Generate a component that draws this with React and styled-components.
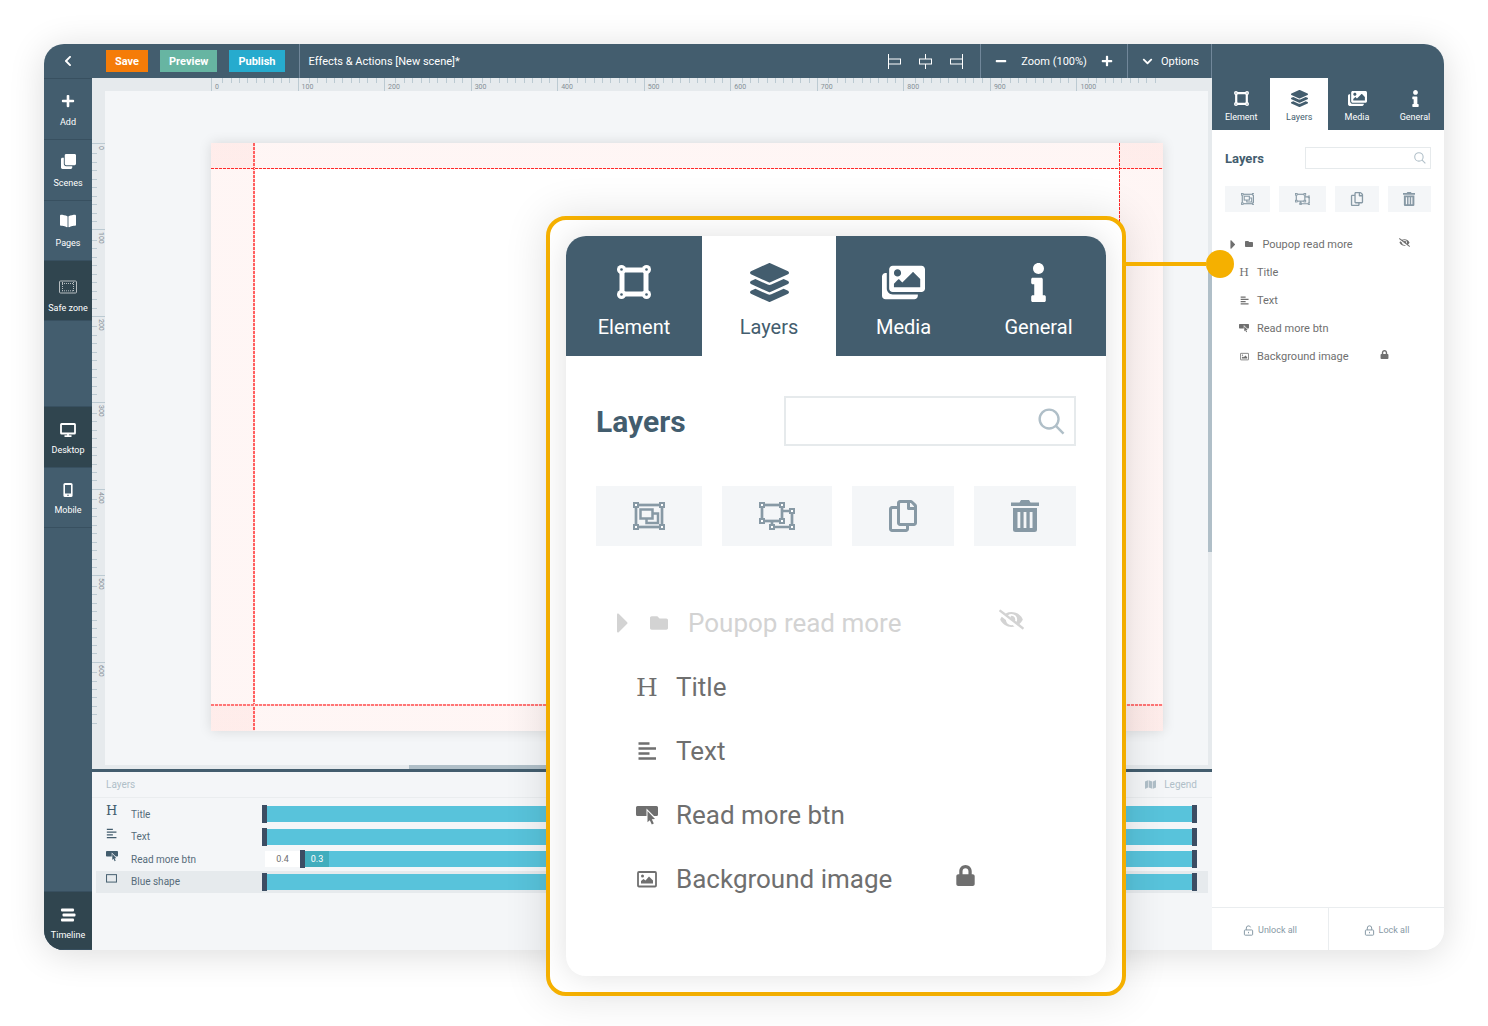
import React from 'react';
import styled, { createGlobalStyle, ThemeProvider } from 'styled-components';
import {
  FaPlus, FaMinus, FaChevronLeft, FaChevronDown, FaClone, FaBookOpen, FaLayerGroup,
  FaImages, FaInfo, FaRegCopy, FaFolder, FaEyeSlash, FaLock, FaMap,
} from 'react-icons/fa';

const colors = {
  slate: '#435d6e',
  slateDark: '#30454f',
  line: '#385060',
  surface: '#f4f6f8',
  ruler: '#e6eaed',
  muted: '#8799a5',
  pale: '#b0bfc8',
  text: '#6f6f6f',
  bar: '#58c3db',
  handle: '#3c4d63',
  amber: '#f5b000',
};

// the layers panel is drawn twice: docked in the editor and magnified in the callout
const docked = {
  scale: 0.433, listGap: 18, indent: 14, folderIndent: 5, nameWidth: 123, folderNameWidth: 137,
};
const magnified = {
  scale: 1, listGap: 45, indent: 40, folderIndent: 20, nameWidth: 279, folderNameWidth: 311,
};
const px = n => props => `${Math.round(n * props.theme.scale)}px`;

const GlobalStyle = createGlobalStyle`
  * { box-sizing: border-box; }
  body {
    margin: 0;
    background: #fff;
    font-family: Roboto, "Liberation Sans", sans-serif;
  }
  button, input {
    font: inherit;
    color: inherit;
    margin: 0;
    padding: 0;
    border: 0;
    background: none;
  }
  svg { display: block; flex: none; }
`;

/* ---------- icons ---------- */

const Icon = ({ w = 24, h = 24, width = '1em', children, ...rest }) => (
  <svg viewBox={`0 0 ${w} ${h}`} width={width} height="1em" fill="none" stroke="currentColor" aria-hidden="true" {...rest}>
    {children}
  </svg>
);

const AlignIcon = ({ side }) => {
  const bar = { left: 0.5, center: 7.5, right: 14.5 }[side];
  const box = { left: 0.5, center: 1.5, right: 2.5 }[side];
  return (
    <Icon w={15} h={15}>
      {side === 'center'
        ? <path d="M7.5 0v5M7.5 10v5" />
        : <path d={`M${bar} 0v15`} />}
      <rect x={box} y="5" width="12" height="5" />
    </Icon>
  );
};

const SafeZoneIcon = () => (
  <Icon w={18} h={14} strokeWidth="1" opacity="0.65">
    <rect x="0.5" y="1" width="17" height="12" rx="1" />
    <path d="M3.5 2v10M14.5 2v10M3 3.5h12M3 10.8h12" strokeDasharray="1 1" />
  </Icon>
);

const DesktopIcon = () => (
  <Icon w={16} h={16}>
    <rect x="1" y="2" width="14" height="9.5" rx="0.6" strokeWidth="1.8" />
    <path d="M8 12v2M4.5 14.2h7" strokeWidth="1.8" />
  </Icon>
);

const MobileIcon = () => (
  <Icon w={16} h={16}>
    <path d="M5 1h6a1.6 1.6 0 0 1 1.6 1.6v10.8a1.6 1.6 0 0 1-1.6 1.6H5a1.6 1.6 0 0 1-1.6-1.6V2.6A1.6 1.6 0 0 1 5 1zM5 3v8.5h6V3zM7.2 12.7v1h1.6v-1z" fill="currentColor" fillRule="evenodd" stroke="none" />
  </Icon>
);

const TimelineIcon = () => (
  <Icon w={16} h={16} fill="currentColor" stroke="none">
    <rect x="1" y="1.5" width="13" height="3" rx="1" />
    <rect x="2.5" y="6.5" width="13" height="3" rx="1" />
    <rect x="1" y="11.5" width="13" height="3" rx="1" />
  </Icon>
);

const ElementIcon = () => (
  <Icon w={34} h={34}>
    <rect x="5" y="5" width="24" height="24" rx="1" strokeWidth="5" />
    {[[4.5, 4.5], [29.5, 4.5], [4.5, 29.5], [29.5, 29.5]].map(([x, y]) => (
      <g key={`${x}-${y}`} stroke="none">
        <circle cx={x} cy={y} r="4.5" fill="currentColor" />
        <circle cx={x} cy={y} r="1.3" fill={colors.slate} />
      </g>
    ))}
  </Icon>
);

const Knots = ({ points }) => points.map(([x, y]) => (
  <rect key={`${x}-${y}`} x={x - 2} y={y - 2} width="4" height="4" strokeWidth="2" fill="#fff" />
));

const GroupIcon = () => (
  <Icon w={32} h={28} strokeWidth="2.7" width="1.143em">
    <rect x="3" y="3" width="26" height="22" />
    <rect x="7.5" y="7.5" width="12" height="9" strokeWidth="2.5" />
    <path d="M19.5 11.5H25v9.5H13.5v-4.5" strokeWidth="2.5" />
    <Knots points={[[3, 3], [29, 3], [3, 25], [29, 25]]} />
  </Icon>
);

const UngroupIcon = () => (
  <Icon w={36} h={28} strokeWidth="2.7" width="1.286em">
    <rect x="3" y="3" width="20" height="16" />
    <path d="M23 9h10v16H13v-6" />
    <Knots points={[[3, 3], [23, 3], [3, 19], [23, 19], [33, 9], [33, 25], [13, 25]]} />
  </Icon>
);

const TrashIcon = () => (
  <Icon w={28} h={32} width="0.875em">
    <path d="M0 2.5h8.5L10 0h8l1.500 2.500H28V6H0zM2 8h24v21.500a2.500 2.500 0 0 1-2.500 2.500h-19A2.500 2.500 0 0 1 2 29.500zM6.500 12v16h2.800V12zM12.600 12v16h2.800V12zM18.700 12v16h2.800V12z" fill="currentColor" fillRule="evenodd" stroke="none" />
  </Icon>
);

const SearchIcon = () => (
  <Icon w={28} h={28} strokeWidth="2.5">
    <circle cx="11.5" cy="11.5" r="9.8" />
    <path d="M18.5 18.5L26.5 26.5" />
  </Icon>
);

const CaretIcon = () => (
  <Icon w={12} h={20} width="0.6em">
    <path d="M1 1.500v17a1 1 0 0 0 1.700.700l8.500-8.500a1 1 0 0 0 0-1.400L2.700.800A1 1 0 0 0 1 1.500z" fill="currentColor" stroke="none" />
  </Icon>
);

const TextIcon = () => (
  <Icon w={20} h={20} strokeWidth="2.5">
    <path d="M1.5 2.5h11M1.5 7.5h17.5M1.5 12.5h11M1.5 17.5h17.5" />
  </Icon>
);

const ButtonIcon = () => (
  <Icon w={22} h={20}>
    <path d="M1.500 1h19A1.500 1.500 0 0 1 22 2.500v7A1.500 1.500 0 0 1 20.500 11H18L10.500 3.500V11h-9A1.500 1.500 0 0 1 0 9.500v-7A1.500 1.500 0 0 1 1.500 1z" fill="currentColor" stroke="none" />
    <path d="M11.500 6l7.500 8-3.200.300 2 4.200-2 1-2-4.300-2.300 2.100z" fill="currentColor" stroke="none" />
  </Icon>
);

const ImageIcon = () => (
  <Icon w={20} h={20}>
    <rect x="1" y="3" width="18" height="14.5" rx="1" strokeWidth="1.8" />
    <path d="M4 14.500v-2.500l2.500-2 2 1.500L12 7.500l4 4v3z" fill="currentColor" stroke="none" />
    <circle cx="5.5" cy="7" r="1.5" fill="currentColor" stroke="none" />
  </Icon>
);

const ShapeIcon = () => (
  <Icon w={20} h={20} strokeWidth="1.8">
    <rect x="1" y="3" width="18" height="13.5" />
  </Icon>
);

const PadlockIcon = ({ open }) => (
  <Icon w={18} h={20} strokeWidth="1.8">
    <rect x="1.5" y="9" width="15" height="9.5" rx="1.5" />
    <path d={open ? 'M5 9V5.500a4 4 0 0 1 7.800-1.200' : 'M5 9V5.500a4 4 0 0 1 8 0V9'} />
    <path d="M9 12.500v2.500" />
  </Icon>
);

const HeadingGlyph = styled.span`
  font-family: "DejaVu Serif", serif;
  line-height: 1;
`;

/* ---------- frame ---------- */

const Page = styled.div`
  position: relative;
  padding: 44px 44px 76px;
`;

const Editor = styled.div`
  display: grid;
  grid-template-columns: 48px minmax(0, 1fr) 232px;
  grid-template-rows: 34px minmax(0, 1fr);
  min-height: calc(100vh - 120px);
  border-radius: 20px;
  overflow: hidden;
  background: ${colors.surface};
  box-shadow: 0 4px 36px rgba(0, 0, 0, 0.14);
`;

/* ---------- top bar ---------- */

const TopBar = styled.header`
  grid-column: 1 / -1;
  display: flex;
  background: ${colors.slate};
  color: #fff;
  font-size: 11px;
`;

const BackButton = styled.button`
  width: 48px;
  display: grid;
  place-items: center;
  font-size: 12px;
`;

const TopGroup = styled.div`
  display: flex;
  align-items: center;
  gap: ${props => props.$gap}px;
  padding: 0 ${props => props.$pad || 14}px 0 14px;
  border-right: 1px solid #71879a;
`;

const TopButton = styled.button`
  height: 22px;
  padding: 0 9px;
  font-weight: 700;
  background: ${props => props.$color};
`;

const IconButton = styled.button`
  display: grid;
  place-items: center;
  font-size: ${props => props.$size}px;
`;

const SceneTitle = styled.h1`
  flex: 1;
  margin: 0;
  padding-left: 9px;
  align-self: center;
  font-size: 11px;
  font-weight: 400;
`;

const OptionsButton = styled.button`
  display: flex;
  align-items: center;
  gap: 8px;
`;

const TopBarEnd = styled.div`
  width: 232px;
`;

/* ---------- left rail ---------- */

const Rail = styled.nav`
  display: flex;
  flex-direction: column;
  background: ${colors.slate};
  color: #fff;
`;

const RailGroup = styled.div`
  display: grid;
  grid-auto-rows: 1fr;
  height: ${props => props.$height}px;
  margin-top: ${props => props.$top || 0};
`;

const RailButton = styled.button`
  display: flex;
  flex-direction: column;
  align-items: center;
  justify-content: flex-end;
  gap: ${props => props.$gap || 8}px;
  padding-bottom: ${props => props.$bottom || 11}px;
  border-top: 1px solid ${colors.line};
  background: ${props => (props.$active ? colors.slateDark : 'transparent')};
  font-size: 9px;
  line-height: 12px;
  white-space: nowrap;

  &:last-child { border-bottom: 1px solid ${colors.line}; }
  svg { font-size: ${props => props.$icon}px; }
`;

const RailItem = ({ icon, label, size = 16, ...rest }) => (
  <RailButton type="button" $icon={size} {...rest}>{icon}{label}</RailButton>
);

/* ---------- stage ---------- */

const Main = styled.main`
  display: flex;
  flex-direction: column;
`;

const Stage = styled.section`
  flex: 1;
  display: grid;
  grid-template-columns: 13px minmax(0, 1fr) 4px;
  grid-template-rows: 13px minmax(0, 1fr) 4px;
  background: ${colors.ruler};
`;

const RulerX = styled.div`
  grid-column: 1 / -1;
  display: grid;
  grid-template-columns: repeat(11, 1fr);
  padding: 0 49px 0 119px;
`;

const RulerY = styled.div`
  display: grid;
  grid-template-rows: repeat(6, minmax(0, 10fr)) minmax(0, 8fr);
  padding: 52px 0 34px;
`;

const RulerCell = styled.div`
  display: flex;
  flex-direction: ${props => (props.$vertical ? 'column' : 'row')};
  font-size: 7px;
  line-height: 8px;
  color: #858f96;
`;

const Tick = styled.span`
  flex: 1 1 0;
  min-width: 0;
  min-height: 0;
  height: ${props => (props.$vertical ? 'auto' : '5px')};
  width: ${props => (props.$vertical ? '5px' : 'auto')};
  border: 0 solid #bccad2;
  border-left-width: ${props => (props.$vertical ? 0 : 1)}px;
  border-top-width: ${props => (props.$vertical ? 1 : 0)}px;
  white-space: nowrap;

  &:first-child {
    height: ${props => (props.$vertical ? 'auto' : '13px')};
    width: ${props => (props.$vertical ? '13px' : 'auto')};
    padding: ${props => (props.$vertical ? '2px 0 0 5px' : '5px 0 0 3px')};
    writing-mode: ${props => (props.$vertical ? 'vertical-rl' : 'horizontal-tb')};
  }
`;

const Workspace = styled.div`
  display: flex;
  padding: 52px 45px 34px 106px;
  background: ${colors.surface};
`;

const dash = (dir, color) => `repeating-linear-gradient(${dir}, ${color} 0 3px, #ffe4e4 3px 4px)`;
const wash = 'linear-gradient(rgba(250, 70, 50, 0.05), rgba(250, 70, 50, 0.05))';

// dashed guides first, then the four translucent bands outside of the safe zone
const Canvas = styled.div`
  flex: 1;
  background:
    ${dash('to right', '#ff2a2a')} left 0 top 25px / 100% 1px no-repeat,
    ${dash('to right', '#ff7676')} left 0 bottom 25px / 100% 2px no-repeat,
    ${dash('to bottom', '#ff6060')} left 42px top 0 / 2px 100% no-repeat,
    ${dash('to bottom', '#ff2a2a')} right 43px top 0 / 1px 100% no-repeat,
    ${wash} left / 43px 100% no-repeat,
    ${wash} right / 43px 100% no-repeat,
    ${wash} top / 100% 26px no-repeat,
    ${wash} bottom / 100% 26px no-repeat,
    #fff;
  box-shadow: 0 0 12px rgba(0, 0, 0, 0.12);
`;

const ScrollY = styled.div`
  padding: 174px 0 213px;
`;

const ScrollX = styled.div`
  grid-column: 2;
  padding: 0 30% 0 304px;
`;

const Thumb = styled.div`
  height: 100%;
  background: ${colors.pale};
`;

const Ruler = ({ vertical }) => {
  const Scale = vertical ? RulerY : RulerX;
  const marks = vertical ? 7 : 11;
  return (
    <Scale aria-hidden="true">
      {Array.from({ length: marks }, (_, i) => (
        <RulerCell key={i} $vertical={vertical}>
          {Array.from({ length: vertical && i === 6 ? 8 : 10 }, (__, j) => (
            <Tick key={j} $vertical={vertical}>{j === 0 ? i * 100 : null}</Tick>
          ))}
        </RulerCell>
      ))}
    </Scale>
  );
};

/* ---------- timeline ---------- */

const Timeline = styled.section`
  height: 181px;
  border-top: 3px solid ${colors.slate};
  background: ${colors.surface};
  color: #566c7a;
  font-size: 10px;
`;

const TimelineHead = styled.div`
  display: flex;
  justify-content: space-between;
  align-items: center;
  height: 26px;
  padding: 0 15px 0 14px;
  border-bottom: 1px solid #eaedef;
  color: ${colors.pale};
`;

const Legend = styled.button`
  display: flex;
  align-items: center;
  gap: 8px;

  svg { font-size: 11px; }
`;

const Tracks = styled.div`
  display: grid;
  grid-template-rows: repeat(4, 1fr);
  height: 90px;
  margin: 5px 4px 0;
`;

const Track = styled.div`
  display: grid;
  grid-template-columns: 25px 131px minmax(0, 1fr);
  align-items: center;
  padding: 0 11px 0 10px;
  background: ${props => (props.$selected ? colors.ruler : 'transparent')};
`;

const TrackIcon = styled.span`
  display: flex;
  font-size: ${props => props.$size || 11}px;
  padding-bottom: 7px;
  color: ${colors.slate};
`;

const TrackBar = styled.div`
  display: flex;
  align-items: center;
  height: 18px;
  padding-left: ${props => (props.$delayed ? 3 : 0)}px;
`;

const Handle = styled.span`
  width: 5px;
  height: 18px;
  background: ${colors.handle};
`;

const Segment = styled.span`
  flex: ${props => (props.$width ? `0 0 ${props.$width}px` : 1)};
  height: 16px;
  line-height: 16px;
  font-size: 9px;
  text-align: center;
  background: ${props => props.$color};
  color: ${props => props.$ink};
`;

const tracks = [
  { name: 'Title', icon: <HeadingGlyph>H</HeadingGlyph>, size: 13 },
  { name: 'Text', icon: <TextIcon /> },
  { name: 'Read more btn', icon: <ButtonIcon />, size: 12, delay: '0.4', effect: '0.3' },
  { name: 'Blue shape', icon: <ShapeIcon />, selected: true },
];

/* ---------- layers panel ---------- */

const Tabs = styled.div`
  display: grid;
  grid-template-columns: 136fr 134fr 135fr 135fr;
  height: ${px(120)};
  background: ${colors.slate};
  color: #fff;
`;

const Tab = styled.button`
  display: flex;
  flex-direction: column;
  align-items: center;
  padding-top: ${px(23)};
  background: ${props => (props.$active ? '#fff' : 'transparent')};
  color: ${props => (props.$active ? colors.slate : '#fff')};
  font-size: ${px(20)};
  line-height: ${px(24)};
`;

const TabIcon = styled.span`
  display: grid;
  place-items: center;
  height: ${px(46)};
  margin-bottom: ${px(10)};
  font-size: ${props => px(props.$size)};
`;

const PanelBody = styled.div`
  padding: ${px(40)} ${px(30)} ${px(65)};
`;

const PanelHead = styled.div`
  display: flex;
  justify-content: space-between;
  align-items: center;
`;

const PanelTitle = styled.h2`
  margin: 0;
  font-size: ${px(30)};
  font-weight: 700;
  color: ${colors.slate};
`;

const SearchBox = styled.label`
  display: flex;
  align-items: center;
  width: ${px(292)};
  height: ${px(50)};
  padding-right: ${px(9)};
  border: ${px(2)} solid #e6eaec;
  color: ${colors.pale};
  font-size: ${px(27)};

  input {
    flex: 1;
    min-width: 0;
    outline: none;
    font-size: ${px(26)};
  }
`;

const Tools = styled.div`
  display: grid;
  grid-template-columns: 106fr 110fr 102fr 102fr;
  gap: ${px(20)};
  margin-top: ${px(40)};
`;

const Tool = styled.button`
  display: grid;
  place-items: center;
  height: ${px(60)};
  background: ${colors.surface};
  color: ${colors.muted};
  font-size: ${props => px(props.$size)};
`;

const LayerList = styled.ul`
  list-style: none;
  margin: ${props => props.theme.listGap}px 0 0;
  padding: 0;
`;

const Layer = styled.li`
  display: flex;
  align-items: center;
  height: ${px(64)};
  padding-left: ${props => (props.$folder ? props.theme.folderIndent : props.theme.indent)}px;
  color: ${props => (props.$dim ? '#d3d3d3' : colors.text)};
  font-size: ${px(26)};
`;

const Caret = styled.button`
  margin-right: ${px(20)};
  font-size: ${px(20)};
`;

const LayerIcon = styled.span`
  display: grid;
  place-items: center;
  width: ${px(22)};
  margin-right: ${px(18)};
  font-size: ${props => px(props.$size || 20)};
`;

const LayerName = styled.span`
  width: ${props => (props.$folder ? props.theme.folderNameWidth : props.theme.nameWidth)}px;
  white-space: nowrap;
`;

const LayerState = styled.span`
  padding-bottom: ${px(8)};
  font-size: ${props => px(props.$size)};
`;

const tabs = [
  { name: 'Element', icon: <ElementIcon />, size: 34 },
  { name: 'Layers', icon: <FaLayerGroup />, size: 39, active: true },
  { name: 'Media', icon: <FaImages />, size: 43 },
  { name: 'General', icon: <FaInfo />, size: 39 },
];

const tools = [
  { name: 'Group', icon: <GroupIcon />, size: 28 },
  { name: 'Ungroup', icon: <UngroupIcon />, size: 28 },
  { name: 'Duplicate', icon: <FaRegCopy />, size: 32 },
  { name: 'Delete', icon: <TrashIcon />, size: 32 },
];

const layers = [
  { name: 'Title', icon: <HeadingGlyph>H</HeadingGlyph>, size: 25 },
  { name: 'Text', icon: <TextIcon /> },
  { name: 'Read more btn', icon: <ButtonIcon />, size: 22 },
  { name: 'Background image', icon: <ImageIcon />, locked: true },
];

const LayersPanel = ({ dimHidden }) => (
  <>
    <Tabs role="tablist">
      {tabs.map(tab => (
        <Tab key={tab.name} type="button" role="tab" aria-selected={!!tab.active} $active={tab.active}>
          <TabIcon $size={tab.size}>{tab.icon}</TabIcon>
          {tab.name}
        </Tab>
      ))}
    </Tabs>
    <PanelBody>
      <PanelHead>
        <PanelTitle>Layers</PanelTitle>
        <SearchBox>
          <input type="text" aria-label="Search layers" />
          <SearchIcon />
        </SearchBox>
      </PanelHead>
      <Tools>
        {tools.map(tool => (
          <Tool key={tool.name} type="button" aria-label={tool.name} $size={tool.size}>{tool.icon}</Tool>
        ))}
      </Tools>
      <LayerList>
        <Layer $folder $dim={dimHidden}>
          <Caret type="button" aria-label="Expand"><CaretIcon /></Caret>
          <LayerIcon $size={18}><FaFolder /></LayerIcon>
          <LayerName $folder>Poupop read more</LayerName>
          <LayerState $size={25}><FaEyeSlash /></LayerState>
        </Layer>
        {layers.map(layer => (
          <Layer key={layer.name}>
            <LayerIcon $size={layer.size}>{layer.icon}</LayerIcon>
            <LayerName>{layer.name}</LayerName>
            {layer.locked && <LayerState $size={21}><FaLock /></LayerState>}
          </Layer>
        ))}
      </LayerList>
    </PanelBody>
  </>
);

const Dock = styled.aside`
  display: flex;
  flex-direction: column;
  justify-content: space-between;
  background: #fff;
`;

const DockFooter = styled.div`
  display: grid;
  grid-template-columns: 1fr 1fr;
  height: 43px;
  border-top: 1px solid #eaedef;
`;

const DockButton = styled.button`
  display: flex;
  justify-content: center;
  align-items: center;
  gap: 4px;
  padding-top: 2px;
  color: ${colors.muted};
  font-size: 9px;

  & + & { border-left: 1px solid #eaedef; }
  svg { font-size: 11px; }
`;

/* ---------- callout ---------- */

const Callout = styled.div`
  position: absolute;
  top: 216px;
  right: 362px;
  width: 580px;
  padding: 16px;
  border: 4px solid ${colors.amber};
  border-radius: 20px;
  background: #fff;
  box-shadow: 0 0 44px rgba(0, 0, 0, 0.12);
`;

const CalloutCard = styled.div`
  overflow: hidden;
  border-radius: 20px;
  background: #fff;
  box-shadow: 0 0 30px rgba(0, 0, 0, 0.12);
`;

const Pointer = styled.div`
  position: absolute;
  top: 30px;
  left: 100%;
  display: flex;
  align-items: center;

  &::before {
    content: '';
    width: 84px;
    height: 4px;
    background: ${colors.amber};
  }
  &::after {
    content: '';
    width: 28px;
    height: 28px;
    border-radius: 50%;
    background: ${colors.amber};
  }
`;

class App extends React.Component {
  render() {
    return (
      <Page>
        <GlobalStyle />
        <Editor>
          <TopBar>
            <BackButton type="button" aria-label="Back"><FaChevronLeft /></BackButton>
            <TopGroup $gap={12}>
              <TopButton type="button" $color="#f57c08">Save</TopButton>
              <TopButton type="button" $color="#67b5a2">Preview</TopButton>
              <TopButton type="button" $color="#26abce">Publish</TopButton>
            </TopGroup>
            <SceneTitle>Effects &amp; Actions [New scene]*</SceneTitle>
            <TopGroup $gap={15} $pad={17}>
              <IconButton type="button" aria-label="Align left" $size={15}><AlignIcon side="left" /></IconButton>
              <IconButton type="button" aria-label="Align center" $size={15}><AlignIcon side="center" /></IconButton>
              <IconButton type="button" aria-label="Align right" $size={15}><AlignIcon side="right" /></IconButton>
            </TopGroup>
            <TopGroup $gap={14}>
              <IconButton type="button" aria-label="Zoom out" $size={12}><FaMinus /></IconButton>
              <span>Zoom (100%)</span>
              <IconButton type="button" aria-label="Zoom in" $size={12}><FaPlus /></IconButton>
            </TopGroup>
            <TopGroup $pad={12}>
              <OptionsButton type="button"><FaChevronDown size={11} />Options</OptionsButton>
            </TopGroup>
            <TopBarEnd />
          </TopBar>

          <Rail>
            <RailGroup $height={243}>
              <RailItem icon={<FaPlus />} label="Add" size={14} />
              <RailItem icon={<FaClone />} label="Scenes" size={15} />
              <RailItem icon={<FaBookOpen />} label="Pages" />
              <RailItem icon={<SafeZoneIcon />} label="Safe zone" size={18} $gap={6} $bottom={6} $active />
            </RailGroup>
            <RailGroup $height={122} $top="85px">
              <RailItem icon={<DesktopIcon />} label="Desktop" $gap={6} $active />
              <RailItem icon={<MobileIcon />} label="Mobile" $gap={6} />
            </RailGroup>
            <RailGroup $height={59} $top="auto">
              <RailItem icon={<TimelineIcon />} label="Timeline" $gap={6} $bottom={8} $active />
            </RailGroup>
          </Rail>

          <Main>
            <Stage>
              <Ruler />
              <Ruler vertical />
              <Workspace><Canvas /></Workspace>
              <ScrollY><Thumb /></ScrollY>
              <ScrollX><Thumb /></ScrollX>
            </Stage>
            <Timeline>
              <TimelineHead>
                <span>Layers</span>
                <Legend type="button"><FaMap />Legend</Legend>
              </TimelineHead>
              <Tracks>
                {tracks.map(track => (
                  <Track key={track.name} $selected={track.selected}>
                    <TrackIcon $size={track.size}>{track.icon}</TrackIcon>
                    <span>{track.name}</span>
                    <TrackBar $delayed={!!track.delay}>
                      {track.delay && <Segment $width={35} $color="#fff" $ink={colors.text}>{track.delay}</Segment>}
                      <Handle />
                      {track.effect && <Segment $width={24} $color="#41adbd" $ink="#fff">{track.effect}</Segment>}
                      <Segment $color={colors.bar} />
                      <Handle />
                    </TrackBar>
                  </Track>
                ))}
              </Tracks>
            </Timeline>
          </Main>

          <ThemeProvider theme={docked}>
            <Dock>
              <div><LayersPanel /></div>
              <DockFooter>
                <DockButton type="button"><PadlockIcon open />Unlock all</DockButton>
                <DockButton type="button"><PadlockIcon />Lock all</DockButton>
              </DockFooter>
            </Dock>
          </ThemeProvider>
        </Editor>

        <ThemeProvider theme={magnified}>
          <Callout>
            <CalloutCard><LayersPanel dimHidden /></CalloutCard>
            <Pointer />
          </Callout>
        </ThemeProvider>
      </Page>
    );
  }
}

export default App;
